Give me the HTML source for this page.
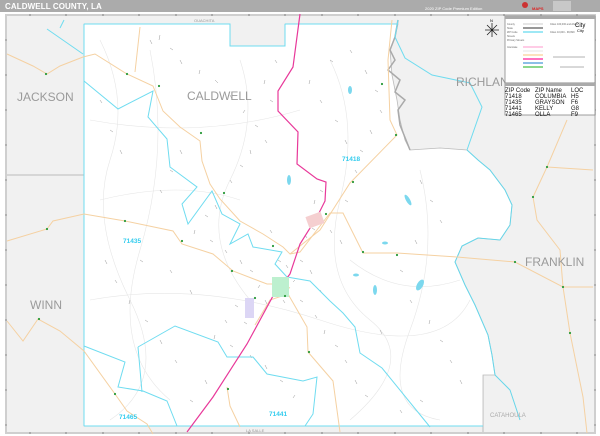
<!DOCTYPE html>
<html><head><meta charset="utf-8"><style>
html,body{margin:0;padding:0;background:#fff;width:600px;height:436px;overflow:hidden;font-family:"Liberation Sans",sans-serif}
.hdr{position:absolute;left:0;top:0;width:600px;height:12px;background:#ababab}
.hdr .t{position:absolute;left:5px;top:2px;font-size:8px;font-weight:bold;color:#fff;letter-spacing:0.1px}
.hdr .s{position:absolute;left:425px;top:6px;font-size:4px;color:#fff}
svg{position:absolute;left:0;top:0}
</style></head><body>
<div class="hdr"><div class="t">CALDWELL COUNTY, LA</div><div class="s">2020 ZIP Code Premium Edition</div></div>
<svg width="600" height="436" viewBox="0 0 600 436">
<rect x="553" y="1" width="18" height="10" fill="#c8c8c8"/>
<circle cx="525" cy="5" r="3" fill="#c33"/>
<text x="532" y="10" font-size="4" fill="#d22" font-weight="bold">MAPS</text>
<rect x="5" y="14" width="591" height="420" fill="#cfcfcf"/>
<rect x="7" y="16" width="587" height="416" fill="#f1f1f1"/>
<g stroke="#555" stroke-width="0.6">
<path d="M30 14v2M66 14v2M103 14v2M139 14v2M176 14v2M212 14v2M249 14v2M285 14v2M322 14v2M358 14v2M395 14v2M431 14v2M468 14v2M504 14v2M541 14v2M577 14v2"/>
<path d="M30 432v2M66 432v2M103 432v2M139 432v2M176 432v2M212 432v2M249 432v2M285 432v2M322 432v2M358 432v2M395 432v2M431 432v2M468 432v2M504 432v2M541 432v2M577 432v2"/>
<path d="M5 40h2M5 75h2M5 110h2M5 145h2M5 180h2M5 215h2M5 250h2M5 285h2M5 320h2M5 355h2M5 390h2M5 425h2"/>
<path d="M594 40h2M594 75h2M594 110h2M594 145h2M594 180h2M594 215h2M594 250h2M594 285h2M594 320h2M594 355h2M594 390h2M594 425h2"/>
</g>
<path d="M7 175H84" stroke="#bbb" stroke-width="1" fill="none"/>
<path d="M483 375V432" stroke="#bbb" stroke-width="1"/>
<path d="M84 24H230V46H285V24H398L395 37L390 50L392 75L397 100L400 120L405 140L410 150L440 148L467 150L478 160L490 170L505 190L512 205L510 225L500 240L478 238L462 246L455 262L465 285L475 305L488 335L492 355L495 375H483V426H84Z" fill="#fff" stroke="#bbb" stroke-width="0.8"/>
<path d="M398 20 L395 37 L390 50 L395 60 L388 70 L400 80 L395 92 L405 100 L398 110 L400 125 L410 150" stroke="#aaa" stroke-width="1.5" fill="none"/>
<path d="M467 150 L478 160 L490 170 L505 190 L512 205 L510 225 L500 240 L478 238 L462 246 L455 262 L465 285 L475 305 L488 335 L492 355 L495 375 L510 390 L520 420" stroke="#66d6ea" stroke-width="1" fill="none"/>
<g stroke="#e6e6e6" stroke-width="0.6" fill="none">
<path d="M100 40 Q130 100 110 160 T130 300 T110 420"/><path d="M150 50 Q170 150 140 250 T170 400"/>
<path d="M240 60 Q260 120 230 180 T250 300"/><path d="M330 60 Q360 120 340 200 T370 320 T350 420"/>
<path d="M420 170 Q440 250 410 330 T440 420"/><path d="M90 120 Q200 140 300 110"/><path d="M90 300 Q200 280 320 320 T470 300"/>
<path d="M100 200 Q180 180 240 200"/><path d="M350 260 Q400 300 460 280"/>
</g>
<!-- small streets -->
<g stroke="#999" stroke-width="0.5" fill="none">
<path d="M150 40l2 4M160 35l-1 5M170 48l3 2M180 60l2 4M200 70l-1 4M215 80l3 3M230 95l2 4M245 110l-2 3M255 125l3 2M265 140l2 3M250 150l1 4M240 165l3 2M230 180l2 3M215 205l2 4M205 215l3 2M195 230l-1 4M210 240l3 2M225 250l2 3M240 260l2 4M250 270l3 2M260 285l-2 3M265 300l2 4M235 305l3 2M225 320l2 3M215 335l-1 4M230 345l3 2M250 355l2 3M265 365l2 4M280 380l3 2M295 395l-2 3M205 380l2 4M190 400l3 2M175 360l2 3M160 340l2 4M145 320l3 2M130 300l-1 4M115 280l2 3M105 260l2 4M140 260l3 2M170 270l2 3M190 290l2 4M300 300l3 2M315 315l2 3M325 330l-1 4M335 345l3 2M345 360l2 3M355 380l2 4M365 395l3 2M320 290l2 3M310 270l2 4M300 260l3 2M305 235l2 3M315 200l-1 4M320 190l3 2M330 230l2 3M340 240l2 4M345 200l3 2M355 170l2 3M345 140l2 4M335 120l3 2M320 100l2 3M310 80l-1 4M330 60l3 2M350 50l2 3M365 70l2 4M375 90l3 2M380 110l2 3M370 130l2 4M360 150l3 2M275 60l2 3M265 80l-1 4M270 100l3 2M180 150l2 4M170 170l3 2M160 190l2 3M120 150l2 4M110 130l3 2M100 100l2 3M420 180l2 4M430 200l3 2M440 220l2 3M415 240l2 4M400 270l3 2M410 300l2 3M430 320l-1 4M440 340l3 2M450 360l2 3M460 380l2 4M420 400l3 2M400 410l2 3M380 330l2 4M270 230l2 3M278 260l3 2M286 265l2 3M295 280l-2 2M283 300l2 3M250 310l2 2M244 322l3 2M320 218l2 2M312 228l3 2"/>
</g>
<g stroke="#6fdcf0" stroke-width="1" fill="none">
<path d="M84 24V426"/>
<path d="M84 24H230V46H285V24"/><path d="M285 24H398"/>
<path d="M47 29L83 54M60 28L64 20"/>
<path d="M84 81L118 109L153 91L148 117L167 139L170 167L197 187L182 204L188 224L212 191L222 214L240 224L230 244L248 234L253 247L282 252L275 264L287 277L310 281L330 301L343 313L355 327L360 353L382 368L430 427"/>
<path d="M84 346L125 362L118 387L143 391L167 401L177 426"/>
<path d="M138 347L175 326L218 342L227 357L253 357L267 374L303 381L317 377L313 414L305 426"/>
<path d="M138 347L142 392"/>
<path d="M398 20L395 37L405 58L432 75L470 83L482 107L467 150"/>
<path d="M84 426H483"/>
</g>
<g stroke="#f5d1a2" stroke-width="1" fill="none">
<path d="M7 54L33 66L47 74L60 66L83 57L95 54L127 74L153 86L163 111L180 127L200 141L202 161L210 184L220 199L240 221L263 234L283 247L290 254L300 252L330 213L343 213L363 253L397 253L457 257L515 262L563 287L593 287"/>
<path d="M135 72L140 27"/>
<path d="M7 241L47 229L53 221L84 214L125 221L173 231L182 244L213 254L233 271L267 284L280 284L290 288"/>
<path d="M7 321L23 341L38 319L60 331L84 351L115 394L127 411L147 424L153 434"/>
<path d="M288 294L307 327L308 352L333 381L340 432"/>
<path d="M227 387L230 406L240 427"/>
<path d="M290 254L320 230L350 183L397 135L390 120L388 60L392 20"/>
<path d="M567 120L547 167L533 197L537 220L560 250L563 287L570 333L583 397L587 433"/><path d="M547 167L593 170"/>
<path d="M255 325L270 300L288 294"/>
</g>
<path d="M300 14L293 67L278 91L278 111L298 132L297 164L317 179L326 182L325 201L317 217L300 244L290 274L273 296L247 344L213 397L187 432" stroke="#e8399a" stroke-width="1.2" fill="none"/>
<rect x="272" y="277" width="17" height="20" fill="#bdf0cf"/>
<rect x="245" y="298" width="9" height="20" fill="#dcd6f5"/>
<rect x="307" y="214" width="16" height="12" fill="#f5cfd0" transform="rotate(-20 315 220)"/>
<g fill="#7cd8ee">
<ellipse cx="289" cy="180" rx="2" ry="5"/><ellipse cx="408" cy="200" rx="2" ry="6" transform="rotate(-30 408 200)"/>
<ellipse cx="385" cy="243" rx="3" ry="1.5"/><ellipse cx="356" cy="275" rx="3" ry="1.5"/><ellipse cx="350" cy="90" rx="2" ry="4"/>
<ellipse cx="420" cy="285" rx="3" ry="6" transform="rotate(30 420 285)"/><ellipse cx="375" cy="290" rx="2" ry="5"/>
</g>
<g fill="#2a9a3a">
<circle cx="127" cy="74" r="1.1"/><circle cx="159" cy="86" r="1.1"/><circle cx="201" cy="133" r="1.1"/><circle cx="224" cy="193" r="1.1"/><circle cx="125" cy="221" r="1.1"/><circle cx="182" cy="241" r="1.1"/><circle cx="232" cy="271" r="1.1"/><circle cx="273" cy="246" r="1.1"/><circle cx="326" cy="214" r="1.1"/><circle cx="46" cy="74" r="1.1"/><circle cx="47" cy="229" r="1.1"/><circle cx="39" cy="319" r="1.1"/><circle cx="115" cy="394" r="1.1"/><circle cx="228" cy="389" r="1.1"/><circle cx="309" cy="352" r="1.1"/><circle cx="285" cy="296" r="1.1"/><circle cx="255" cy="298" r="1.1"/><circle cx="363" cy="252" r="1.1"/><circle cx="397" cy="255" r="1.1"/><circle cx="515" cy="262" r="1.1"/><circle cx="563" cy="287" r="1.1"/><circle cx="570" cy="333" r="1.1"/><circle cx="547" cy="167" r="1.1"/><circle cx="533" cy="197" r="1.1"/><circle cx="382" cy="84" r="1.1"/><circle cx="396" cy="135" r="1.1"/><circle cx="353" cy="182" r="1.1"/>
</g>
<g fill="#9a9a9a" font-size="12">
<text x="17" y="101">JACKSON</text><text x="187" y="100">CALDWELL</text><text x="30" y="309">WINN</text>
<text x="456" y="86">RICHLAND</text><text x="525" y="266">FRANKLIN</text>
</g>
<text x="490" y="417" font-size="6" fill="#aaa">CATAHOULA</text>
<text x="194" y="22" font-size="4" fill="#999">OUACHITA</text>
<text x="246" y="432" font-size="4" fill="#999">LA SALLE</text>
<g fill="#33ccee" font-size="6.5" font-weight="bold">
<text x="342" y="161">71418</text><text x="123" y="243">71435</text><text x="119" y="419">71465</text><text x="269" y="416">71441</text>
</g>
<g stroke="#222" stroke-width="0.8"><path d="M492 23V37M485 30H499M487 25L497 35M497 25L487 35"/></g>
<text x="490" y="22" font-size="4">N</text>
<rect x="505" y="16" width="90" height="67" fill="#fff" stroke="#888" stroke-width="0.8"/>
<rect x="505" y="16" width="90" height="3" fill="#aaa"/>
<g stroke-width="1.5">
<path d="M523 24h20" stroke="#ddd"/><path d="M523 28h20" stroke="#777"/><path d="M523 32h20" stroke="#7ee0f2"/><path d="M523 47h20" stroke="#fbd"/><path d="M523 51h20" stroke="#eee"/><path d="M523 55h20" stroke="#fcd9a8"/><path d="M523 59h20" stroke="#f4a"/><path d="M523 63h20" stroke="#6ad"/><path d="M523 67h20" stroke="#6c6"/>
</g>
<g font-size="2.5" fill="#666"><text x="507" y="25">County</text><text x="507" y="29">State</text><text x="507" y="33">ZIP Code</text><text x="507" y="37">Streets</text><text x="507" y="41">Primary Streets</text><text x="507" y="48">Interstate</text><text x="550" y="25">Cities 100,000 and Above</text><text x="550" y="33">Cities 10,000 - 99,999</text></g>
<text x="575" y="27" font-size="6">City</text><text x="577" y="32" font-size="4">City</text>
<path d="M553 57h32M560 67h24" stroke="#666" stroke-width="0.5"/>
<rect x="505" y="83" width="90" height="32" fill="#fff" stroke="#888" stroke-width="0.8"/>
<rect x="505" y="83" width="90" height="3" fill="#aaa"/>
<g font-size="6" fill="#111">
<text x="505" y="92">ZIP Code</text><text x="535" y="92">ZIP Name</text><text x="571" y="92">LOC</text>
<text x="505" y="98">71418</text><text x="535" y="98">COLUMBIA</text><text x="571" y="98">H5</text>
<text x="505" y="104">71435</text><text x="535" y="104">GRAYSON</text><text x="571" y="104">F6</text>
<text x="505" y="110">71441</text><text x="535" y="110">KELLY</text><text x="571" y="110">G8</text>
<text x="505" y="116">71465</text><text x="535" y="116">OLLA</text><text x="571" y="116">F9</text>
</g>
</svg>
</body></html>
